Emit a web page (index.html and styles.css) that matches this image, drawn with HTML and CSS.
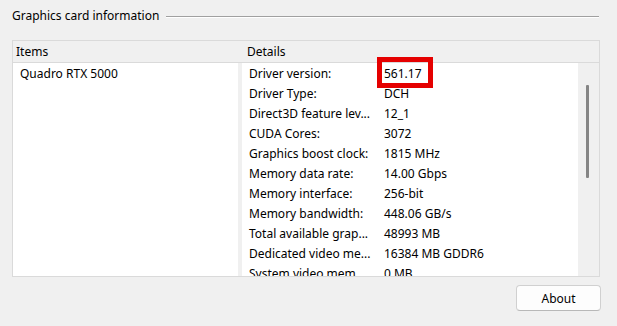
FILE: index.html
```html
<!DOCTYPE html>
<html lang="en">
<head>
    <meta charset="UTF-8">
    <title>Graphics card information</title>
    <link rel="stylesheet" href="styles.css">
</head>
<body>
    <div class="group">
        <div class="group-title">
            <span>Graphics card information</span>
            <div class="rule"></div>
        </div>

        <div class="grid">
            <div class="grid-head">
                <div class="col-items">Items</div>
                <div class="col-details">Details</div>
            </div>
            <div class="grid-body">
                <div class="items-pane">
                    <div class="row">Quadro RTX 5000</div>
                </div>
                <div class="details-pane">
                    <div class="row">
                        <span class="label">Driver version:</span>
                        <span class="value highlighted">561.17</span>
                    </div>
                    <div class="row"><span class="label">Driver Type:</span><span class="value">DCH</span></div>
                    <div class="row"><span class="label">Direct3D feature lev...</span><span class="value">12_1</span></div>
                    <div class="row"><span class="label">CUDA Cores:</span><span class="value">3072</span></div>
                    <div class="row"><span class="label">Graphics boost clock:</span><span class="value">1815 MHz</span></div>
                    <div class="row"><span class="label">Memory data rate:</span><span class="value">14.00 Gbps</span></div>
                    <div class="row"><span class="label">Memory interface:</span><span class="value">256-bit</span></div>
                    <div class="row"><span class="label">Memory bandwidth:</span><span class="value">448.06 GB/s</span></div>
                    <div class="row"><span class="label">Total available grap...</span><span class="value">48993 MB</span></div>
                    <div class="row"><span class="label">Dedicated video me...</span><span class="value">16384 MB GDDR6</span></div>
                    <!-- ultima linha cortada pela borda da lista -->
                    <div class="row partial"><span class="label">System video mem...</span><span class="value">0 MB</span></div>
                </div>
                <div class="scrollbar">
                    <div class="thumb"></div>
                </div>
            </div>
        </div>

        <div class="actions">
            <button type="button">About</button>
        </div>
    </div>
</body>
</html>
```

FILE: styles.css
```css
/* Janela base */
body {
    margin: 0;
    padding: 0;
    background-color: #f0f0f0;
    font-family: 'Noto Sans', sans-serif;
    font-size: 12px;
    color: #000;
}

.group {
    width: 617px;
    height: 326px;
    overflow: hidden;
}

/* Titulo do grupo com linha */
.group-title {
    display: flex;
    align-items: center;
    height: 32px;
    padding-left: 12px;
    padding-right: 18px;
}

.group-title span {
    line-height: 16px;
}

.group-title .rule {
    flex: 1;
    height: 1px;
    margin-left: 7px;
    background-color: #a0a0a0;
    box-shadow: 0 1px 0 #fff;
}

/* Lista de itens e detalhes */
.grid {
    margin: 8px 17px 0 12px;
    border: 1px solid #dadada;
}

.grid-head {
    display: flex;
    height: 21px;
    line-height: 21px;
    border-bottom: 1px solid #dadada;
}

.col-items {
    width: 226px;
    padding-left: 3px;
}

.col-details {
    padding-left: 5px;
}

.grid-body {
    display: flex;
    height: 213px;
}

.items-pane {
    width: 225px;
    background-color: #fff;
    padding: 1px 0 0 7px;
    box-sizing: border-box;
}

.details-pane {
    width: 336px;
    margin-left: 4px;
    background-color: #fff;
    padding: 1px 0 0 7px;
    box-sizing: border-box;
}

.row {
    display: flex;
    height: 20px;
    line-height: 20px;
    white-space: nowrap;
}

.row.partial {
    height: 12px;
    overflow: hidden;
}

.label {
    width: 135px;
    flex-shrink: 0;
}

.value {
    position: relative;
}

/* Destaque vermelho */
.highlighted::after {
    content: '';
    position: absolute;
    left: -7px;
    top: -7px;
    width: 56px;
    height: 31px;
    box-sizing: border-box;
    border: 5px solid #e50000;
}

.scrollbar {
    flex: 1;
    position: relative;
}

.thumb {
    position: absolute;
    left: 8px;
    top: 22px;
    width: 3px;
    height: 93px;
    border-radius: 1px;
    background-color: #858585;
}

/* Botao */
.actions {
    display: flex;
    justify-content: flex-end;
    padding: 8px 16px 0 0;
}

button {
    width: 85px;
    height: 26px;
    font-family: 'Noto Sans', sans-serif;
    font-size: 12px;
    color: #000;
    background-color: #fdfdfd;
    border: 1px solid #d0d0d0;
    border-bottom-color: #b8b8b8;
    border-radius: 4px;
    padding: 0;
}
```
